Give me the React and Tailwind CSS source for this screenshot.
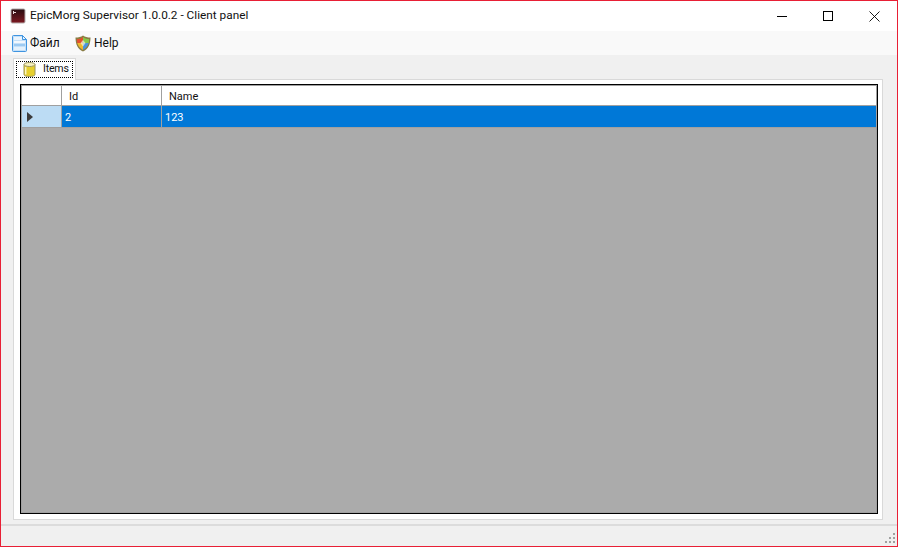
export default function App() {
  return (
    <div className="w-[898px] h-[547px] flex flex-col border border-[#e81f35] bg-[#f0f0f0] overflow-hidden font-['Roboto',sans-serif] text-[12px] text-[#111]">
      {/* Title bar */}
      <div className="h-[30px] shrink-0 bg-white flex items-center">
        <svg width="16" height="16" viewBox="0 0 16 16" className="ml-[9px]">
          <defs>
            <linearGradient id="appIcon" x1="0" y1="0" x2="0" y2="1">
              <stop offset="0" stopColor="#2a0c10" />
              <stop offset="1" stopColor="#7a1820" />
            </linearGradient>
          </defs>
          <rect x="0.5" y="0.5" width="15" height="15" rx="2" fill="#b4acac" />
          <rect x="1.5" y="1.5" width="13" height="13" rx="1" fill="url(#appIcon)" />
          <path d="M3.5 3V6M3.5 4.5H6" stroke="#e8d8d8" />
        </svg>
        <span className="ml-[4px] text-[11.8px] leading-none">EpicMorg Supervisor 1.0.0.2 - Client panel</span>
        <div className="ml-auto flex items-center h-full">
          <div className="w-[46px] flex justify-center">
            <svg width="10" height="10" viewBox="0 0 10 10"><path d="M0 5.5H10" stroke="#000" fill="none" /></svg>
          </div>
          <div className="w-[46px] flex justify-center">
            <svg width="10" height="10" viewBox="0 0 10 10"><rect x="0.5" y="0.5" width="9" height="9" stroke="#000" fill="none" /></svg>
          </div>
          <div className="w-[46px] flex justify-center">
            <svg width="11" height="11" viewBox="0 0 11 11"><path d="M0.5 0.5L10.5 10.5M10.5 0.5L0.5 10.5" stroke="#000" fill="none" strokeWidth="0.9" /></svg>
          </div>
        </div>
      </div>
      {/* Menu */}
      <div className="h-[24px] shrink-0 bg-[#f9f9f9] flex items-center pl-[11px] text-[12px]">
        <svg width="15" height="17" viewBox="0 0 15 17" className="mr-[3px]">
          <path d="M0.5 1.5Q0.5 0.5 1.5 0.5H10.5L14.5 4.5V15.5Q14.5 16.5 13.5 16.5H1.5Q0.5 16.5 0.5 15.5Z" fill="#c4e0f8" stroke="#3f94e0" />
          <path d="M10.5 0.5V4.5H14.5Z" fill="#eaf4fd" stroke="#3f94e0" />
          <rect x="2" y="2" width="8" height="3" fill="#eaf4fd" />
          <rect x="2" y="6" width="11" height="2" fill="#f2f8fe" />
          <rect x="2" y="9" width="11" height="2" fill="#9ccaf2" />
          <rect x="2" y="12" width="11" height="3" fill="#e4f1fc" />
        </svg>
        <span className="w-[29px]">Файл</span>
        <svg width="16" height="17" viewBox="0 0 16 17" className="ml-[16px] mr-[3px]">
          <path d="M8 0.5C10 2 12.5 2.5 15.5 2.5C15.5 9 13.5 14 8 16.5C2.5 14 0.5 9 0.5 2.5C3.5 2.5 6 2 8 0.5Z" fill="#8a7d45" />
          <path d="M8 2V8H2.2C2 6.5 2 5.5 2 4C4.5 4 6.2 3.5 8 2Z" fill="#e2502f" />
          <path d="M8 2V8H13.8C14 6.5 14 5.5 14 4C11.5 4 9.8 3.5 8 2Z" fill="#86c84a" />
          <path d="M8 8V15C5 13.2 3 11 2.3 8Z" fill="#f0b92c" />
          <path d="M8 8V15C11 13.2 13 11 13.7 8Z" fill="#4a94dc" />
          <path d="M8 5L10.5 8L8 11.5L5.5 8Z" fill="#f4f4dc" opacity="0.7" />
        </svg>
        <span>Help</span>
      </div>
      {/* Tabs */}
      <div className="flex-1 flex flex-col px-[12px] pt-[3px] min-h-0">
        <div className="h-[22px] shrink-0 w-[63px] bg-white border border-b-0 border-[#d9d9d9] relative z-10 -mb-px p-[2px]">
          <div className="h-[17px] border border-dotted border-black flex items-center pl-[6px]">
            <svg width="13" height="15" viewBox="0 0 13 15" className="mr-[7px]">
              <path d="M1 2.5V12.5C1 13.8 3.5 14.5 6.5 14.5C9.5 14.5 12 13.8 12 12.5V2.5Z" fill="#e6cf2e" stroke="#9a9560" />
              <ellipse cx="6.5" cy="2.5" rx="5.5" ry="2" fill="#f6f1c0" stroke="#9a9560" />
              <path d="M2.7 5V12.5" stroke="#fbf6c0" strokeWidth="1.5" />
            </svg>
            <span className="text-[10.6px] tracking-[-0.2px] leading-none">Items</span>
          </div>
        </div>
        <div className="h-[441px] shrink-0 w-[870px] bg-white border border-[#d9d9d9] pt-[4px] pl-[6px]">
          <div className="h-[430px] w-[858px] border border-black">
            <div className="h-full w-full border border-[#a0a0a0] bg-[#ababab] flex flex-col">
              <div className="h-[20px] flex shrink-0 bg-white border-b border-[#a0a0a0] text-[11px] leading-none">
                <div className="w-[40px] border-r border-[#a0a0a0]" />
                <div className="w-[100px] border-r border-[#a0a0a0] flex items-center pl-[7px] pt-[2px]">Id</div>
                <div className="flex-1 flex items-center pl-[7px] pt-[2px]">Name</div>
              </div>
              <div className="h-[22px] flex shrink-0 border-b border-[#a0a0a0] text-[11px] text-white leading-none">
                <div className="w-[40px] bg-[#bcdcf4] border-r border-[#a0a0a0] flex items-center pl-[5px]">
                  <svg width="6" height="10" viewBox="0 0 6 10"><path d="M0 0L6 5L0 10Z" fill="#3c3c3c" /></svg>
                </div>
                <div className="w-[100px] bg-[#0078d7] border-r border-[#a0a0a0] flex items-center pl-[3px] pt-[1px]">2</div>
                <div className="flex-1 bg-[#0078d7] flex items-center pl-[3px] pt-[1px]">123</div>
              </div>
            </div>
          </div>
        </div>
      </div>
      {/* Status bar */}
      <div className="h-[22px] shrink-0 border-t-2 border-[#dcdcdc] flex items-end justify-end pr-[1px] pb-[2px]">
        <svg width="11" height="11" viewBox="0 0 11 11" fill="#a0a0a0">
          <rect x="8" y="0" width="2" height="2" />
          <rect x="4" y="4" width="2" height="2" />
          <rect x="8" y="4" width="2" height="2" />
          <rect x="0" y="8" width="2" height="2" />
          <rect x="4" y="8" width="2" height="2" />
          <rect x="8" y="8" width="2" height="2" />
        </svg>
      </div>
    </div>
  );
}
